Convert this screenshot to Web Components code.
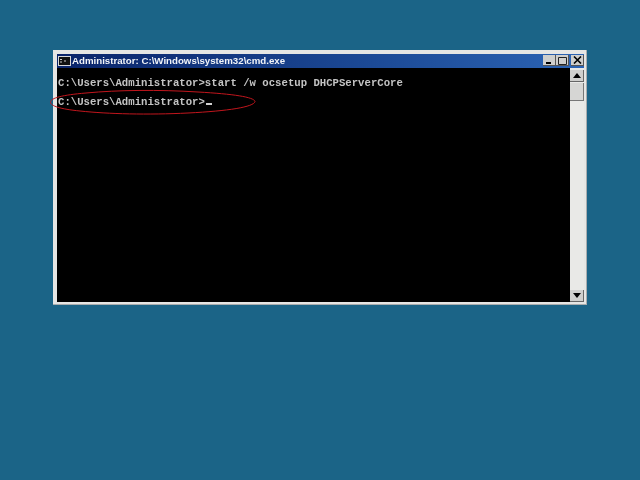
<!DOCTYPE html>
<html>
<head>
<meta charset="utf-8">
<style>
  html, body { margin: 0; height: 100%; background: #1b6487; overflow: hidden; }
</style>
</head>
<body>
<desktop-screen>
  <cmd-window title-text="Administrator: C:\Windows\system32\cmd.exe">
    <console-line>C:\Users\Administrator&gt;start /w ocsetup DHCPServerCore</console-line>
    <console-line cursor>C:\Users\Administrator&gt;</console-line>
  </cmd-window>
</desktop-screen>

<script>
const desktopTemplate = document.createElement('template')
desktopTemplate.innerHTML = `
  <style>
    :host { display: block; position: relative; width: 640px; height: 480px; background: #1b6487; overflow: hidden; }
    svg { position: absolute; left: 48px; top: 89px; }
  </style>
  <slot></slot>
  <!-- red circle drawn over the prompt -->
  <svg width="210" height="27" viewBox="0 0 210 27">
    <path d="M2.5 13 C3 9 14 6 38 4 C70 1 110 0.5 150 3 C185 5 206 8 207 12.5 C206 18 180 22 140 24 C100 26 60 25 32 22 C12 20 2.5 17 2.5 13 Z" fill="none" stroke="#c2161d" stroke-width="1"/>
  </svg>
`
class DesktopScreen extends HTMLElement {
  constructor() {
    super()
    this.attachShadow({mode: 'open'})
    this.shadowRoot.appendChild(desktopTemplate.content.cloneNode(true))
  }
}
customElements.define('desktop-screen', DesktopScreen)

const windowTemplate = document.createElement('template')
windowTemplate.innerHTML = `
  <style>
    :host {
      position: absolute; left: 53px; top: 50px; width: 534px; height: 255px;
      box-sizing: border-box; display: flex; flex-direction: column;
      background: #e6e6e4; padding: 4px 2px 2px 4px;
      border-right: 1px solid #a9adaf; border-bottom: 1px solid #a9adaf;
      filter: blur(0.4px);
    }
    .title {
      height: 14px; display: flex; align-items: center; gap: 0; padding: 0 0 1px 1px; box-sizing: border-box;
      background: linear-gradient(90deg, #0a246a 0%, #1c4a96 60%, #2c64b4 100%);
      color: #f2f4f8; font: bold 9.7px "Liberation Sans", sans-serif; white-space: nowrap;
    }
    .title span { flex: 1; margin-left: 1px; padding-bottom: 1px; }
    .ico { width: 13px; height: 10px; background: #d8d8d8; display: flex; padding: 1px; box-sizing: border-box; }
    .ico svg { display: block; }
    .btn {
      width: 13px; height: 11px; background: #cfcfcd; box-sizing: border-box;
      border-right: 1px solid #555; border-bottom: 1px solid #555;
      display: flex; align-items: center; justify-content: center;
    }
    .btn svg { display: block; }
    .btn.x { margin-left: 2px; }
    .body { flex: 1; display: flex; min-height: 0; }
    .console { flex: 1; background: #000; padding: 9px 0 0 1px; display: flex; flex-direction: column; gap: 6px; }
    .bar { width: 14px; background: #e9e9e7; display: flex; flex-direction: column; padding-top: 2px; }
    .arrow {
      height: 12px; background: #cfcfcd; box-sizing: border-box;
      border-right: 1px solid #666; border-bottom: 1px solid #666;
      display: flex; align-items: center; justify-content: center;
    }
    .thumb { height: 18px; margin-top: 1px; background: #d6d6d4; box-sizing: border-box; border-right: 1px solid #777; border-bottom: 1px solid #777; }
    .track { flex: 1; }
  </style>
  <div class="title">
    <div class="ico"><svg width="11" height="8"><rect width="11" height="8" fill="#111"/><path d="M1 2.5H3M1 5H3M5 4H7" stroke="#ccc" stroke-width="1"/></svg></div>
    <span></span>
    <div class="btn"><svg width="8" height="8"><rect x="1" y="6" width="5" height="2" fill="#000"/></svg></div>
    <div class="btn"><svg width="9" height="9"><path d="M0.5 1.5H8.5V8.5H0.5Z" fill="none" stroke="#222" stroke-width="1"/></svg></div>
    <div class="btn x"><svg width="9" height="8"><path d="M1 0.5L8 7.5M8 0.5L1 7.5" stroke="#000" stroke-width="1.6"/></svg></div>
  </div>
  <div class="body">
    <div class="console"><slot></slot></div>
    <div class="bar">
      <div class="arrow"><svg width="8" height="5"><path d="M4 0L8 5H0Z" fill="#000"/></svg></div>
      <div class="thumb"></div>
      <div class="track"></div>
      <div class="arrow"><svg width="8" height="5"><path d="M0 0H8L4 5Z" fill="#000"/></svg></div>
    </div>
  </div>
`
class CmdWindow extends HTMLElement {
  constructor() {
    super()
    this.attachShadow({mode: 'open'})
    this.shadowRoot.appendChild(windowTemplate.content.cloneNode(true))
  }
  connectedCallback() {
    this.shadowRoot.querySelector('.title span').textContent = this.getAttribute('title-text')
  }
}
customElements.define('cmd-window', CmdWindow)

const lineTemplate = document.createElement('template')
// the pre is only on .text, whitespace around the style tag must not show
lineTemplate.innerHTML = `
  <style>
    :host {
      display: block; height: 13px;
      color: #c4c4c4; font: bold 10.65px/13px "Liberation Mono", monospace;
    }
    .text { white-space: pre; }
    .cursor { display: none; width: 6px; height: 2px; background: #d0d0d0; margin-left: 1px; }
    :host([cursor]) .cursor { display: inline-block; }
  </style>
  <span class="text"><slot></slot></span><span class="cursor"></span>
`
class ConsoleLine extends HTMLElement {
  constructor() {
    super()
    this.attachShadow({mode: 'open'})
    this.shadowRoot.appendChild(lineTemplate.content.cloneNode(true))
  }
}
customElements.define('console-line', ConsoleLine)
</script>
</body>
</html>
